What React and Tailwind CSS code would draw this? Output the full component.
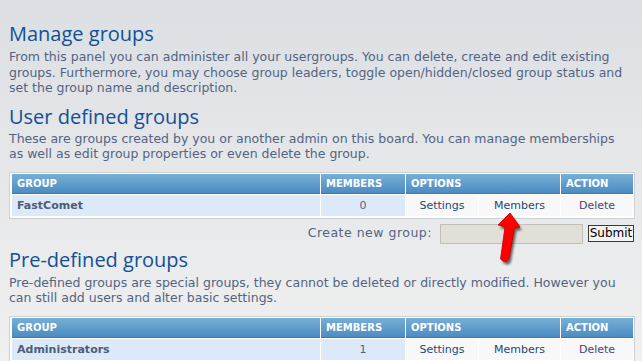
import React from "react";

const body = { fontFamily: '"DejaVu Sans", Verdana, sans-serif' };
const head = { fontFamily: '"Open Sans", "Trebuchet MS", sans-serif' };

function GroupTable({ name, count }) {
  const th =
    "h-[20px] bg-gradient-to-b from-[#76afd8] to-[#4d8cc0] border-b border-[#3d79ad] pl-[5px] text-[10px] font-bold text-white leading-[19px]";
  return (
    <div className="w-[626px] border border-[#cdd0d4] bg-white px-[2px] pt-px pb-[2px]">
      <div className="grid grid-cols-[308px_84px_72px_81px_72px] gap-px">
        <div className={th}>GROUP</div>
        <div className={th}>MEMBERS</div>
        <div className={"col-span-2 " + th}>OPTIONS</div>
        <div className={th}>ACTION</div>
        <div className="h-[21px] bg-[#dce9f9] pl-[5px] text-[11px] font-bold text-[#4c5d77] leading-[21px]">{name}</div>
        <div className="h-[21px] bg-[#dce9f9] text-center text-[11px] text-[#536482] leading-[21px]">{count}</div>
        <div className="h-[21px] bg-[#f8f8f8] text-center text-[11px] text-[#23477a] leading-[21px]">Settings</div>
        <div className="h-[21px] bg-[#f8f8f8] text-center text-[11px] text-[#23477a] leading-[21px]">Members</div>
        <div className="h-[21px] bg-[#f8f8f8] text-center text-[11px] text-[#4a3d7c] leading-[21px]">Delete</div>
      </div>
    </div>
  );
}

export default function App() {
  return (
    <div
      className="relative w-[642px] h-[361px] overflow-hidden bg-gradient-to-b from-[#dcdfe3] to-[#f0f0f0] pl-[9px] pt-[22px]"
      style={body}
    >
      <h1 className="h-[24px] text-[20px] leading-[24px] text-[#115098]" style={head}>
        Manage groups
      </h1>
      <p className="mt-[3px] text-[12.5px] leading-[15.5px] text-[#536482]">
        From this panel you can administer all your usergroups. You can delete, create and edit existing
        <br />
        groups. Furthermore, you may choose group leaders, toggle open/hidden/closed group status and
        <br />
        set the group name and description.
      </p>
      <h2 className="mt-[9px] h-[24px] text-[20px] leading-[24px] text-[#115098]" style={head}>
        User defined groups
      </h2>
      <p className="mt-[2px] text-[12.5px] leading-[15.5px] text-[#536482]">
        These are groups created by you or another admin on this board. You can manage memberships
        <br />
        as well as edit group properties or even delete the group.
      </p>
      <div className="mt-[10px]">
        <GroupTable name="FastComet" count="0" />
      </div>
      <div className="mt-[5px] flex h-[20px] w-[625px] items-center justify-end">
        <span className="mr-[8px] text-[12.5px] tracking-[0.5px] text-[#536482]">Create new group:</span>
        <div className="h-[20px] w-[143px] border border-[#c2bfb6] bg-[#e2dfd9]" />
        <button
          className="ml-[5px] h-[17px] w-[46px] border border-[#3a3a3a] bg-[#f2f2f2] text-[12px] leading-[15px] text-black"
          style={body}
        >
          Submit
        </button>
      </div>
      <h2 className="mt-[4px] h-[24px] text-[20px] leading-[24px] text-[#115098]" style={head}>
        Pre-defined groups
      </h2>
      <p className="mt-[3px] text-[12.5px] leading-[15.5px] text-[#536482]">
        Pre-defined groups are special groups, they cannot be deleted or directly modified. However you
        <br />
        can still add users and alter basic settings.
      </p>
      <div className="mt-[10px]">
        <GroupTable name="Administrators" count="1" />
      </div>
      <svg className="absolute left-[490px] top-[208px]" width="40" height="62" viewBox="0 0 40 62">
        <defs>
          <filter id="sh" x="-50%" y="-50%" width="200%" height="200%">
            <feGaussianBlur stdDeviation="1.2" />
          </filter>
        </defs>
        <path
          d="M20,5 L30,19 L24.5,20 L19,51 Q17,55 13,53 L10.5,51 L15,19 L8,17 Z"
          fill="#000"
          opacity="0.55"
          transform="translate(2,3)"
          filter="url(#sh)"
        />
        <path
          d="M20,5 L30,19 L24.5,20 L19,51 Q17,55 13,53 L10.5,51 L15,19 L8,17 Z"
          fill="#ff0000"
          stroke="#c00000"
          strokeWidth="0.8"
          strokeLinejoin="round"
        />
      </svg>
    </div>
  );
}
